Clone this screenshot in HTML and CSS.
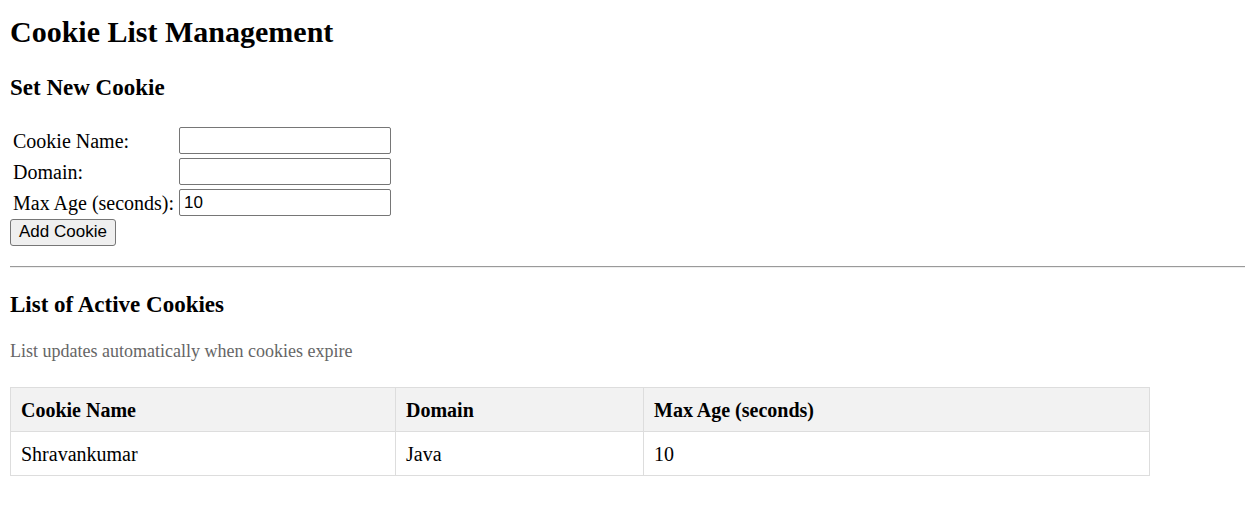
FILE: index.html
```html
<!DOCTYPE html>
<html lang="en">
<head>
<meta charset="utf-8">
<title>Cookie List Management</title>
<link rel="stylesheet" href="styles.css">
</head>
<body>
<h1 class="page-title">Cookie List Management</h1>
<h2 class="section-title">Set New Cookie</h2>
<form class="cookie-form">
  <div class="fields">
    <label for="name">Cookie Name:</label>
    <input class="field" type="text" id="name" name="name">
    <label for="domain">Domain:</label>
    <input class="field" type="text" id="domain" name="domain">
    <label for="age">Max Age (seconds):</label>
    <input class="field" type="text" id="age" name="age" value="10">
  </div>
  <button class="add" type="submit">Add Cookie</button>
</form>
<hr class="divider">
<h2 class="section-title">List of Active Cookies</h2>
<p class="note">List updates automatically when cookies expire</p>
<table class="cookies">
  <colgroup><col class="col-name"><col class="col-domain"><col></colgroup>
  <thead>
    <tr><th scope="col">Cookie Name</th><th scope="col">Domain</th><th scope="col">Max Age (seconds)</th></tr>
  </thead>
  <tbody>
    <tr><td>Shravankumar</td><td>Java</td><td>10</td></tr>
  </tbody>
</table>
</body>
</html>
```

FILE: styles.css
```css
body {
  margin: 0 0 0 10px;
  background: #fff;
  color: #000;
  font: 20px/22px "Liberation Serif", "Times New Roman", serif;
}

.page-title {
  margin: 0;
  padding-top: 15px;
  font-size: 30px;
  line-height: 34px;
}

.section-title {
  margin: 26px 0;
  font-size: 23px;
  line-height: 26px;
}

.fields {
  display: grid;
  grid-template-columns: max-content 212px;
  gap: 4px 5px;
  align-items: center;
  padding-left: 3px;
}

.field {
  box-sizing: border-box;
  width: 100%;
  height: 27px;
  padding: 1px 4px;
  border: 1px solid #767676;
  border-radius: 2px;
  background: #fff;
  color: #000;
  font: 17px "Liberation Sans", Arial, sans-serif;
}

.add {
  display: block;
  height: 27px;
  margin-top: 3px;
  padding: 0 8px 2px;
  border: 1px solid #767676;
  border-radius: 3px;
  background: #efefef;
  color: #000;
  font: 17px "Liberation Sans", Arial, sans-serif;
}

.divider {
  margin: 20px 0 0;
  border: 0 solid #9a9a9a;
  border-width: 1px 0;
  border-bottom-color: #eee;
}

.divider + .section-title {
  margin: 24px 0 22px;
}

.note {
  margin: 0 0 25px;
  color: #666;
  font-size: 18px;
}

.cookies {
  width: 1140px;
  max-width: 100%;
  table-layout: fixed;
  border-collapse: collapse;
}

.col-name {
  width: 385px;
}

.col-domain {
  width: 248px;
}

.cookies th,
.cookies td {
  padding: 11px 10px 9px;
  border: 1px solid #ddd;
  text-align: left;
  line-height: 23px;
}

.cookies th {
  background: #f2f2f2;
}
```
